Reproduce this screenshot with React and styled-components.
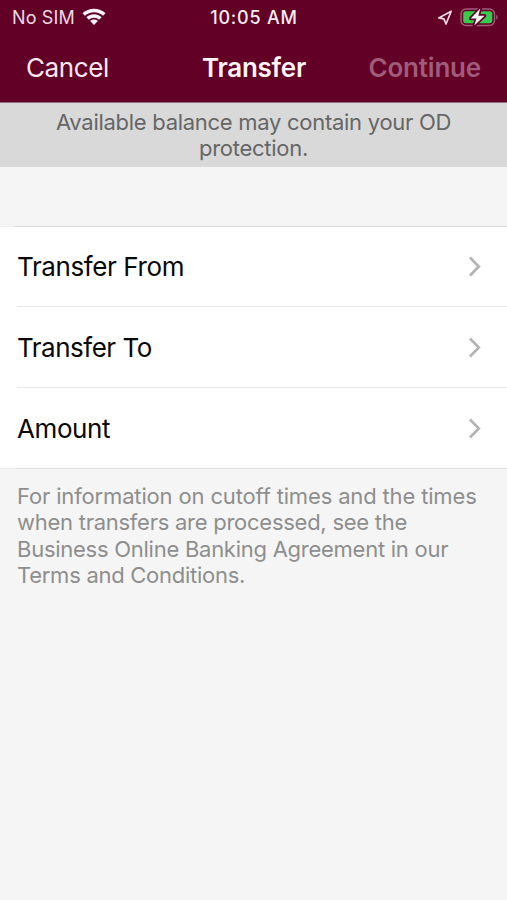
import React from "react";
import styled, { createGlobalStyle } from "styled-components";

const GlobalStyle = createGlobalStyle`
  * { box-sizing: border-box; }
  body {
    margin: 0;
    background: #f5f5f5;
    font-family: Inter, "Liberation Sans", sans-serif;
  }
`;

const Screen = styled.main`
  width: 100%;
  min-height: 900px;
  background: #f5f5f5;
`;

const Header = styled.header`
  height: 103px;
  background: #620026;
  border-bottom: 1px solid #917080;
  color: #f8edf2;
`;

const StatusBar = styled.div`
  display: grid;
  grid-template-columns: 1fr auto 1fr;
  align-items: center;
  height: 34px;
  padding: 0 8px;
  line-height: 36px;
`;

const StatusGroup = styled.div`
  display: flex;
  align-items: center;
  justify-content: ${({ $end }) => ($end ? "flex-end" : "flex-start")};
  gap: ${({ $gap }) => $gap}px;
  height: 34px;
  padding-left: ${({ $end }) => ($end ? 0 : 4)}px;
`;

const Carrier = styled.span`
  font-size: 18px;
  letter-spacing: 0.15px;
  color: #eedae3;
`;

const Clock = styled.time`
  font-size: 18px;
  font-weight: 500;
  letter-spacing: 0.8px;
  padding-left: 1px;
`;

const NavBar = styled.nav`
  display: grid;
  grid-template-columns: 1fr auto 1fr;
  align-items: center;
  height: 68px;
  padding: 0 26px;
`;

const NavButton = styled.button`
  justify-self: ${({ $end }) => ($end ? "end" : "start")};
  padding: 0;
  border: 0;
  background: none;
  font: inherit;
  font-size: 26px;
  line-height: 32px;
  font-weight: ${({ $end }) => ($end ? 600 : 400)};
  letter-spacing: ${({ $spacing }) => $spacing}px;
  color: ${({ disabled }) => (disabled ? "#a05c7a" : "#f8e9f0")};
`;

const Title = styled.h1`
  margin: 0;
  padding-left: 1px;
  font-size: 26px;
  line-height: 32px;
  font-weight: 600;
  letter-spacing: -0.25px;
  color: #fff5fa;
`;

const Notice = styled.p`
  height: 64px;
  margin: 0;
  padding: 6px 40px 0;
  background: #d9d9d9;
  color: #666;
  font-size: 22px;
  line-height: 26.2px;
  letter-spacing: -0.28px;
  text-align: center;
`;

const List = styled.ul`
  display: grid;
  grid-template-rows: 80px 81px 81px;
  margin: 59px 0 0;
  padding: 0 0 1px;
  list-style: none;
  background: linear-gradient(#dcdcdc, #dcdcdc) 14px 0 / 100% 1px no-repeat,
    linear-gradient(#dcdcdc, #dcdcdc) 16px 100% / 100% 1px no-repeat,
    linear-gradient(#eee, #eee) 0 0 / 100% 1px no-repeat,
    linear-gradient(#eee, #eee) 0 100% / 100% 1px no-repeat, #fff;
`;

const Row = styled.li`
  display: flex;
  align-items: center;
  justify-content: space-between;
  margin-left: 17px;
  padding: 1px 26.5px 0 0;
  color: #080808;
  font-size: 26px;
  letter-spacing: ${({ $spacing }) => $spacing}px;

  & + & {
    padding-top: 0;
    border-top: 1px solid #e8e8e8;
  }
`;

const Footnote = styled.p`
  margin: 0;
  padding: 14px 17px;
  color: #8e8e8e;
  font-size: 22px;
  line-height: 26.4px;
`;

const FootLine = styled.span`
  display: block;
  white-space: nowrap;
  letter-spacing: ${({ $spacing }) => $spacing}px;
`;

const Wifi = () => (
  <svg width="24" height="20" viewBox="0 0 24 20" fill="#fff5fa">
    <path d="M12 0.8C7.6 0.8 3.5 2.5 .5 5.2L3 7.8C5.4 5.6 8.5 4.3 12 4.3S18.600 5.600 21 7.800L23.500 5.200C20.500 2.500 16.400.8 12 .8Z" />
    <path d="M12 6.300C9.100 6.300 6.400 7.400 4.400 9.200L6.900 11.700C8.300 10.500 10 9.700 12 9.700S15.700 10.500 17.100 11.700L19.600 9.200C17.600 7.400 14.900 6.300 12 6.300Z" />
    <path d="M12 11.500C10.500 11.500 9.200 12 8.200 13L12 16.900 15.800 13C14.800 12 13.500 11.500 12 11.500Z" />
  </svg>
);

const LocationArrow = () => (
  <svg width="16" height="16" viewBox="0 0 16 16" fill="none" stroke="#efd9e3" strokeWidth="1.7" strokeLinejoin="round">
    <path d="M14.200 1.300L1.700 7.900 6.900 8.900 9 14Z" />
  </svg>
);

const Battery = () => (
  <svg width="39" height="22" viewBox="0 0 39 22">
    <rect x="1" y="2" width="33.500" height="16.500" rx="5" fill="none" stroke="#a05c7a" strokeWidth="1.400" />
    <rect x="3.200" y="4.200" width="29.100" height="12.100" rx="2.800" fill="#35cd4b" />
    <path d="M36.200 8V12.600C38.100 11.900 38.100 8.700 36.200 8Z" fill="#a05c7a" />
    <path d="M20.300 1.600L10.700 11.500H16.500L14.300 18.600 24.600 8.700H18.300Z" fill="#fff" stroke="#620026" strokeWidth="3.400" strokeLinejoin="round" paintOrder="stroke" />
  </svg>
);

const Chevron = () => (
  <svg width="13" height="21" viewBox="0 0 13 21" fill="none" stroke="#b4b4b4" strokeWidth="2.700">
    <path d="M2 1.500L10.800 10.500L2 19.500" />
  </svg>
);

const rows = [
  { label: "Transfer From", spacing: -0.4 },
  { label: "Transfer To", spacing: -0.5 },
  { label: "Amount", spacing: -0.4 },
];

const footnote = [
  { text: "For information on cutoff times and the times", spacing: -0.155 },
  { text: "when transfers are processed, see the", spacing: -0.26 },
  { text: "Business Online Banking Agreement in our", spacing: -0.26 },
  { text: "Terms and Conditions.", spacing: -0.27 },
];

export default function App() {
  return (
    <>
      <GlobalStyle />
      <Screen>
        <Header>
          <StatusBar>
            <StatusGroup $gap={7.5}>
              <Carrier>No SIM</Carrier>
              <Wifi />
            </StatusGroup>
            <Clock>10:05 AM</Clock>
            <StatusGroup $end $gap={7}>
              <LocationArrow />
              <Battery />
            </StatusGroup>
          </StatusBar>
          <NavBar>
            <NavButton $spacing={-0.4}>Cancel</NavButton>
            <Title>Transfer</Title>
            <NavButton $end $spacing={-0.2} disabled>Continue</NavButton>
          </NavBar>
        </Header>
        <Notice>
          Available balance may contain your OD
          <br />
          protection.
        </Notice>
        <List>
          {rows.map(({ label, spacing }) => (
            <Row key={label} $spacing={spacing}>
              {label}
              <Chevron />
            </Row>
          ))}
        </List>
        <Footnote>
          {footnote.map(({ text, spacing }) => (
            <FootLine key={text} $spacing={spacing}>{text}</FootLine>
          ))}
        </Footnote>
      </Screen>
    </>
  );
}
